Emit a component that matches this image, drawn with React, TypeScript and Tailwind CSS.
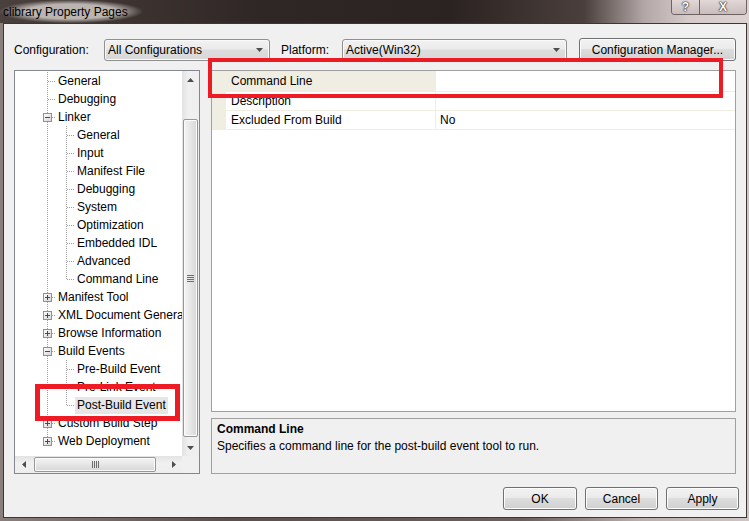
import React from 'react';

type TreeRow = {
  label: string;
  level: 1 | 2;
  box?: '+' | '-';
  last?: boolean;
  selected?: boolean;
};

const rows: TreeRow[] = [
  { label: 'General', level: 1 },
  { label: 'Debugging', level: 1 },
  { label: 'Linker', level: 1, box: '-' },
  { label: 'General', level: 2 },
  { label: 'Input', level: 2 },
  { label: 'Manifest File', level: 2 },
  { label: 'Debugging', level: 2 },
  { label: 'System', level: 2 },
  { label: 'Optimization', level: 2 },
  { label: 'Embedded IDL', level: 2 },
  { label: 'Advanced', level: 2 },
  { label: 'Command Line', level: 2, last: true },
  { label: 'Manifest Tool', level: 1, box: '+' },
  { label: 'XML Document Generator', level: 1, box: '+' },
  { label: 'Browse Information', level: 1, box: '+' },
  { label: 'Build Events', level: 1, box: '-' },
  { label: 'Pre-Build Event', level: 2 },
  { label: 'Pre-Link Event', level: 2 },
  { label: 'Post-Build Event', level: 2, last: true, selected: true },
  { label: 'Custom Build Step', level: 1, box: '+' },
  { label: 'Web Deployment', level: 1, box: '+', last: true },
];

const dot = { stroke: '#a0a0a0', strokeDasharray: '1 1' };

function Gutter({ row }: { row: TreeRow }) {
  const w = row.level === 1 ? 41 : 60;
  const lastL1 = row.level === 1 && row.last;
  return (
    <svg width={w} height={18} className="shrink-0" shapeRendering="crispEdges">
      <line x1={32.5} y1={0} x2={32.5} y2={lastL1 ? 10 : 18} {...dot} />
      {row.level === 1 && (
        <line x1={row.box ? 37 : 33} y1={9.5} x2={41} y2={9.5} {...dot} />
      )}
      {row.level === 2 && (
        <>
          <line x1={51.5} y1={0} x2={51.5} y2={row.last ? 10 : 18} {...dot} />
          <line x1={52} y1={9.5} x2={60} y2={9.5} {...dot} />
        </>
      )}
      {row.box && (
        <>
          <defs>
            <linearGradient id="bx" x1="0" y1="0" x2="1" y2="1">
              <stop offset="0" stopColor="#ffffff" />
              <stop offset="1" stopColor="#d6d6d6" />
            </linearGradient>
          </defs>
          <rect x={28.5} y={5.5} width={8} height={8} fill="url(#bx)" stroke="#919191" />
          <line x1={30} y1={9.5} x2={35} y2={9.5} stroke="#2b4b8b" />
          {row.box === '+' && <line x1={32.5} y1={7} x2={32.5} y2={12} stroke="#2b4b8b" />}
        </>
      )}
    </svg>
  );
}

function Arrow({ dir }: { dir: 'up' | 'down' | 'left' | 'right' }) {
  const pts = {
    up: '0,4 7,4 3.5,0',
    down: '0,0 7,0 3.5,4',
    left: '4,0 4,7 0,3.5',
    right: '0,0 0,7 4,3.5',
  }[dir];
  const horiz = dir === 'left' || dir === 'right';
  return (
    <svg width={horiz ? 4 : 7} height={horiz ? 7 : 4}>
      <polygon points={pts} fill="#4d4d4d" />
    </svg>
  );
}

function SelectBox({ value, width }: { value: string; width: string }) {
  return (
    <div
      className={`${width} h-[22px] flex items-center justify-between pl-[3px] pr-[6px] rounded-[3px] border border-[#8e8f8f] bg-[linear-gradient(#f2f2f2,#ebebeb_45%,#dddddd_50%,#d8d8d8)] shadow-[inset_0_0_0_1px_#fafafa]`}
    >
      <span>{value}</span>
      <Arrow dir="down" />
    </div>
  );
}

function Button({ label, width }: { label: string; width: string }) {
  return (
    <button
      className={`${width} h-[23px] flex items-center justify-center rounded-[3px] border border-[#707070] bg-[linear-gradient(#f2f2f2,#ebebeb_45%,#dddddd_50%,#d0d0d0)] shadow-[inset_0_0_0_1px_#fcfcfc] text-black`}
    >
      {label}
    </button>
  );
}

export default function App() {
  return (
    <div className="relative w-[749px] h-[521px] overflow-hidden font-['Liberation_Sans',Arial,sans-serif] text-[12px] text-black bg-[linear-gradient(90deg,#8a7f7c_0%,#5a4f4c_30%,#6b605d_70%,#b8acac_85%,#cfc4c4_100%)] flex flex-col">
      {/* title bar */}
      <div className="h-[23px] shrink-0 flex items-start justify-between bg-[linear-gradient(90deg,#4a403d_0%,#2f2725_35%,#2b2321_60%,#4a3f3d_78%,#b3a6a6_86%,#d6cbcb_92%,#ddd3d3_100%)]">
        <div className="h-[23px] flex items-center pl-[3px] pr-[14px] bg-[radial-gradient(ellipse_at_center,rgba(200,194,191,0.9)_45%,rgba(200,194,191,0)_72%)] text-[12px] text-black">
          clibrary Property Pages
        </div>
        <div className="flex mr-[2px] h-[15px] rounded-b-[4px] border border-t-0 border-[#6e6262] overflow-hidden shadow-[inset_0_0_0_1px_rgba(255,255,255,0.35)]">
          <div className="w-[28px] flex items-center justify-center border-r border-[#6e6262] bg-[linear-gradient(#e2d8d8,#c9bcbc)] text-white font-bold text-[12px] leading-none [text-shadow:0_0_1px_#222,0_0_1px_#222,0_0_2px_#333]">
            ?
          </div>
          <div className="w-[46px] flex items-center justify-center bg-[linear-gradient(#e2d8d8,#c9bcbc)] text-white font-bold text-[12px] leading-none [text-shadow:0_0_1px_#222,0_0_1px_#222,0_0_2px_#333]">
            X
          </div>
        </div>
      </div>

      {/* dialog body */}
      <div className="ml-[3px] mr-[2px] h-[495px] shrink-0 border border-[#3f3535] bg-[#f0f0f0] pl-[10px] pr-[9px] pt-[14px] flex flex-col">
        {/* toolbar */}
        <div className="h-[23px] flex items-center">
          <span className="w-[90px]">Configuration:</span>
          <SelectBox value="All Configurations" width="w-[166px]" />
          <span className="ml-[11px] w-[61px]">Platform:</span>
          <SelectBox value="Active(Win32)" width="w-[225px]" />
          <div className="ml-[12px]">
            <Button label="Configuration Manager..." width="w-[157px]" />
          </div>
        </div>

        {/* main area */}
        <div className="mt-[9px] h-[404px] flex gap-[11px]">
          {/* tree */}
          <div className="w-[186px] h-full border border-[#828790] bg-white flex flex-col">
            <div className="flex h-[385px]">
              <div className="w-[167px] pt-[1px] overflow-hidden whitespace-nowrap">
                {rows.map((row, i) => (
                  <div key={i} className="h-[18px] flex items-center">
                    <Gutter row={row} />
                    <span
                      className={`px-[2px] leading-[17px] ${row.selected ? 'bg-[#e6e6e6]' : ''}`}
                    >
                      {row.label}
                    </span>
                  </div>
                ))}
              </div>
              {/* vertical scrollbar */}
              <div className="w-[17px] flex flex-col bg-[linear-gradient(90deg,#e3e3e3,#f0f0f0_40%,#eeeeee)]">
                <div className="h-[17px] flex items-center justify-center">
                  <Arrow dir="up" />
                </div>
                <div className="h-[31px]" />
                <div className="mx-[1px] h-[318px] rounded-[2px] border border-[#979797] bg-[linear-gradient(90deg,#f4f4f4,#e6e6e6_50%,#d6d6d6)] shadow-[inset_0_0_0_1px_#fbfbfb] flex items-center justify-center">
                  <div className="flex flex-col gap-[1px]">
                    <div className="w-[7px] h-[1px] bg-[#6e6e6e]" />
                    <div className="w-[7px] h-[1px] bg-[#6e6e6e]" />
                    <div className="w-[7px] h-[1px] bg-[#6e6e6e]" />
                    <div className="w-[7px] h-[1px] bg-[#6e6e6e]" />
                  </div>
                </div>
                <div className="flex-1" />
                <div className="h-[17px] flex items-center justify-center">
                  <Arrow dir="down" />
                </div>
              </div>
            </div>
            {/* horizontal scrollbar */}
            <div className="h-[17px] flex">
              <div className="w-[167px] flex items-center bg-[linear-gradient(#e3e3e3,#f0f0f0_40%,#eeeeee)]">
                <div className="w-[17px] h-full flex items-center justify-center">
                  <Arrow dir="left" />
                </div>
                <div className="ml-[2px] w-[122px] h-[15px] rounded-[2px] border border-[#979797] bg-[linear-gradient(#f4f4f4,#e6e6e6_50%,#d6d6d6)] shadow-[inset_0_0_0_1px_#fbfbfb] flex items-center justify-center gap-[1px]">
                  <div className="w-[1px] h-[7px] bg-[#6e6e6e]" />
                  <div className="w-[1px] h-[7px] bg-[#6e6e6e]" />
                  <div className="w-[1px] h-[7px] bg-[#6e6e6e]" />
                  <div className="w-[1px] h-[7px] bg-[#6e6e6e]" />
                </div>
                <div className="flex-1" />
                <div className="w-[17px] h-full flex items-center justify-center">
                  <Arrow dir="right" />
                </div>
              </div>
              <div className="w-[17px] bg-[#f0f0f0]" />
            </div>
          </div>

          {/* property grid + description */}
          <div className="w-[525px] h-full flex flex-col gap-[6px]">
            <div className="h-[342px] border border-[#a0a0a0] bg-white">
              {[
                { name: 'Command Line', value: '', selected: true, h: 'h-[21px]' },
                { name: 'Description', value: '', h: 'h-[19px]' },
                { name: 'Excluded From Build', value: 'No', h: 'h-[19px]' },
              ].map((p) => (
                <div key={p.name} className={`${p.h} flex`}>
                  <div className="w-[14px] bg-[#f0ede2]" />
                  <div
                    className={`w-[210px] pl-[5px] flex items-center border-b border-r border-[#f0ede2] ${p.selected ? 'bg-[#f0ede2]' : ''}`}
                  >
                    {p.name}
                  </div>
                  <div className="flex-1 pl-[4px] flex items-center border-b border-[#f0ede2]">
                    {p.value}
                  </div>
                </div>
              ))}
            </div>
            <div className="flex-1 border border-[#a0a0a0] bg-[#f0f0f0] px-[5px] pt-[2px] leading-[17px]">
              <div className="font-bold">Command Line</div>
              <div>Specifies a command line for the post-build event tool to run.</div>
            </div>
          </div>
        </div>

        {/* dialog buttons */}
        <div className="mt-[13px] flex justify-end gap-[8px] mr-[-2px]">
          <Button label="OK" width="w-[74px]" />
          <Button label="Cancel" width="w-[73px]" />
          <Button label="Apply" width="w-[73px]" />
        </div>
      </div>

      {/* annotation boxes */}
      <div className="absolute left-[208px] top-[58px] w-[515px] h-[40px] border-[4px] border-[#ed1c24]" />
      <div className="absolute left-[35px] top-[384px] w-[145px] h-[37px] border-[5px] border-[#ed1c24]" />
    </div>
  );
}
